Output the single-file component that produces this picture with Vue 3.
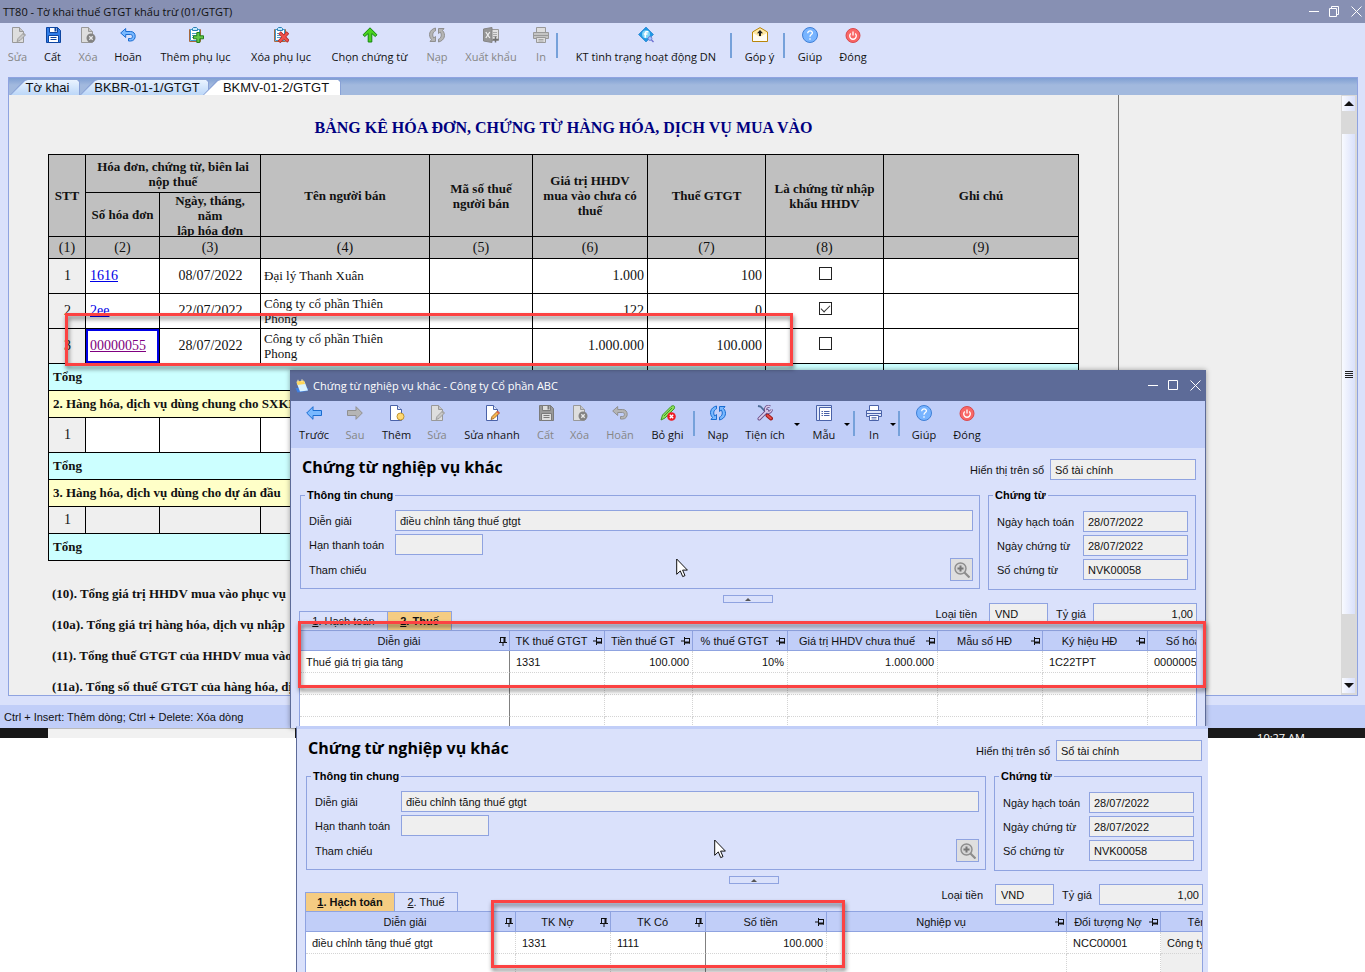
<script setup>
const mainTools = [
  { icon: 'edit', label: 'Sửa', w: 35, off: true },
  { icon: 'save', label: 'Cất', w: 35 },
  { icon: 'delete', label: 'Xóa', w: 36, off: true },
  { icon: 'undo', label: 'Hoãn', w: 44 },
  { icon: 'list-add', label: 'Thêm phụ lục', w: 91 },
  { icon: 'list-del', label: 'Xóa phụ lục', w: 80 },
  { icon: 'up', label: 'Chọn chứng từ', w: 97 },
  { icon: 'refresh', label: 'Nạp', w: 38, off: true },
  { icon: 'excel', label: 'Xuất khẩu', w: 70, off: true },
  { icon: 'print', label: 'In', w: 30, off: true },
  { sep: true },
  { icon: 'check', label: 'KT tình trạng hoạt động DN', w: 168 },
  { sep: true },
  { icon: 'mail', label: 'Góp ý', w: 47 },
  { sep: true },
  { icon: 'help', label: 'Giúp', w: 42 },
  { icon: 'power', label: 'Đóng', w: 44 },
]

const voucherTools = [
  { icon: 'prev', label: 'Trước', w: 46 },
  { icon: 'next', label: 'Sau', w: 36, off: true },
  { icon: 'new', label: 'Thêm', w: 47 },
  { icon: 'edit', label: 'Sửa', w: 34, off: true },
  { icon: 'edit', label: 'Sửa nhanh', w: 76 },
  { icon: 'save', label: 'Cất', w: 31, off: true },
  { icon: 'delete', label: 'Xóa', w: 37, off: true },
  { icon: 'undo', label: 'Hoãn', w: 44, off: true },
  { icon: 'unpost', label: 'Bỏ ghi', w: 51 },
  { sep: true },
  { icon: 'refresh', label: 'Nạp', w: 38 },
  { icon: 'tools', label: 'Tiện ích', w: 56 },
  { drop: true, label: 'Mở Tiện ích', w: 12 },
  { icon: 'form', label: 'Mẫu', w: 38 },
  { drop: true, label: 'Mở Mẫu', w: 10 },
  { sep: true },
  { icon: 'print', label: 'In', w: 30 },
  { drop: true, label: 'Mở In', w: 9 },
  { sep: true },
  { icon: 'help', label: 'Giúp', w: 40 },
  { icon: 'power', label: 'Đóng', w: 46 },
]

const sheetTabs = [
  { label: 'Tờ khai', w: 70 },
  { label: 'BKBR-01-1/GTGT', w: 129 },
  { label: 'BKMV-01-2/GTGT', w: 138, active: true },
]

const sheetCols = [37, 74, 101, 169, 103, 115, 118, 118, 195]

const invoices = [
  { n: 1, no: '1616', date: '08/07/2022', seller: 'Đại lý Thanh Xuân', value: '1.000', tax: '100' },
  { n: 2, no: '2ee', date: '22/07/2022', seller: 'Công ty cổ phần Thiên Phong', value: '122', tax: '0', imported: true },
  { n: 3, no: '00000055', date: '28/07/2022', seller: 'Công ty cổ phần Thiên Phong', value: '1.000.000', tax: '100.000', picked: true },
]

const notes = [
  '(10). Tổng giá trị HHDV mua vào phục vụ',
  '(10a). Tổng giá trị hàng hóa, dịch vụ nhập',
  '(11). Tổng thuế GTGT của HHDV mua vào',
  '(11a). Tổng số thuế GTGT của hàng hóa, dịch vụ',
]

const vouchers = [
  {
    id: 'tax',
    framed: true,
    tabs: [
      { key: '1', label: 'Hạch toán', w: 89 },
      { key: '2', label: 'Thuế', w: 64, active: true },
    ],
    cols: [
      { label: 'Diễn giải', w: 210, value: 'Thuế giá trị gia tăng', upright: true, frozen: true },
      { label: 'TK thuế GTGT', w: 95, value: '1331' },
      { label: 'Tiền thuế GT', w: 88, value: '100.000', right: true },
      { label: '% thuế GTGT', w: 95, value: '10%', right: true },
      { label: 'Giá trị HHDV chưa thuế', w: 150, value: '1.000.000', right: true },
      { label: 'Mẫu số HĐ', w: 105, value: '' },
      { label: 'Ký hiệu HĐ', w: 105, value: '1C22TPT' },
      { label: 'Số hóa đơn', w: 105, value: '00000055' },
    ],
    blanks: 3,
  },
  {
    id: 'post',
    framed: false,
    tabs: [
      { key: '1', label: 'Hạch toán', w: 90, active: true },
      { key: '2', label: 'Thuế', w: 63 },
    ],
    cols: [
      { label: 'Diễn giải', w: 210, value: 'điều chỉnh tăng thuế gtgt', upright: true },
      { label: 'TK Nợ', w: 95, value: '1331', upright: true },
      { label: 'TK Có', w: 95, value: '1111', upright: true, frozen: true },
      { label: 'Số tiền', w: 121, value: '100.000', right: true },
      { label: 'Nghiệp vụ', w: 240, value: '' },
      { label: 'Đối tượng Nợ', w: 94, value: 'NCC00001' },
      { label: 'Tên', w: 84, value: 'Công ty', locked: true },
    ],
    blanks: 1,
  },
]
const total = (cols) => cols.reduce((sum, c) => sum + c.w, 0)
</script>

<template>
  <div class="desktop">
    <svg class="defs" aria-hidden="true">
      <symbol id="i-edit" viewBox="0 0 16 16">
        <path d="M2.500.5h7l4 4v11h-11z" fill="var(--paper)" stroke="var(--line)" />
        <path d="M9.500.500v4h4" fill="var(--fold)" stroke="var(--line)" />
        <path d="M7 14.500l1-3L13.500 6l2 2L10 13.500z" fill="var(--pencil)" stroke="var(--pencil-line)" stroke-width=".8" />
        <path d="M12.500 7l2 2 1-1-2-2z" fill="var(--eraser)" />
      </symbol>
      <symbol id="i-save" viewBox="0 0 16 16">
        <path d="M1.500.500h11l3 3v12h-14z" fill="var(--disk)" stroke="var(--disk-line)" />
        <path d="M4.500.500h8v5h-8z" fill="var(--paper)" stroke="var(--disk-line)" />
        <path d="M9.500 1h2v3.500h-2z" fill="var(--disk-line)" />
        <path d="M3.500 8.500h10v7h-10z" fill="var(--paper)" stroke="var(--disk-line)" />
        <path d="M5.500 10.500h6M5.500 12.500h6" stroke="var(--disk-line)" />
      </symbol>
      <symbol id="i-delete" viewBox="0 0 16 16">
        <path d="M1.500.5h7l4 4v11h-11z" fill="var(--paper)" stroke="var(--line)" />
        <path d="M8.500.5v4h4" fill="var(--fold)" stroke="var(--line)" />
        <circle cx="11" cy="11" r="4.500" fill="#838383" />
        <path d="M9.300 9.300l3.400 3.400M12.700 9.300l-3.400 3.400" stroke="#e8e8e8" stroke-width="1.300" />
      </symbol>
      <symbol id="i-undo" viewBox="0 0 16 16">
        <path d="M.7 6l5-4.500v3h5c6 0 6 9.500 0 9.500H8.500v-2.500h2c2.600 0 2.600-4 0-4H5.700v3z" fill="var(--blue)" stroke="var(--blue-line)" stroke-linejoin="round" />
      </symbol>
      <symbol id="i-clip" viewBox="0 0 16 16">
        <path d="M1.500 2.500h11v12h-11z" fill="#fff" stroke="#a9683c" />
        <path d="M2.500 2.500h9v11h-9z" fill="#fff" stroke="#3c9ad0" />
        <path d="M4.500 3.500v-2l1-1h3l1 1v2z" fill="#bfe8fb" stroke="#2b80b4" />
        <path d="M4 6.500h6M4 8.500h5M4 10.500h4" stroke="#4f9fca" />
      </symbol>
      <symbol id="i-list-add" viewBox="0 0 16 16">
        <use href="#i-clip" />
        <path d="M8.800 5.500h3v3.300h3.700v3h-3.700v3.700h-3v-3.700H5.500v-3h3.300z" fill="#63c745" stroke="#237f1d" />
      </symbol>
      <symbol id="i-list-del" viewBox="0 0 16 16">
        <use href="#i-clip" />
        <path d="M6.500 5.500l9 9M15 5.500l-9 9.500" stroke="#b02a2a" stroke-width="3.600" />
        <path d="M6.800 6l8 8M14.500 6l-8 8.500" stroke="#f0524c" stroke-width="2.200" />
      </symbol>
      <symbol id="i-up" viewBox="0 0 16 16">
        <path d="M8 .8l7 7-1.800 1.700-3.400-3V15H6.200V6.500l-3.400 3L1 7.800z" fill="#4bd31e" stroke="#13870d" />
      </symbol>
      <symbol id="i-refresh" viewBox="0 0 16 16">
        <path d="M6.500 1C0 2.500-1 9 2.500 12.500L1 14.500h5.500V9.500L4.700 11C3 8.500 3.500 5 6.500 3.800z" fill="var(--blue)" stroke="var(--blue-line)" stroke-linejoin="round" />
        <path d="M9.500 15c6.500-1.500 7.500-8 4-11.500L15 1.500H9.500v5L11.300 5c1.700 2.500 1.200 6-1.800 7.200z" fill="var(--blue)" stroke="var(--blue-line)" stroke-linejoin="round" />
      </symbol>
      <symbol id="i-excel" viewBox="0 0 16 16">
        <path d="M8 2.500h7.500v11H8z" fill="#e2e2e2" stroke="#999" />
        <path d="M10 5.500h4M10 7.500h4M10 9.500h4" stroke="#aaa" />
        <path d="M.5 2L9 .5v15L.5 14z" fill="#969696" stroke="#858585" />
        <path d="M2.800 5l4 6M6.800 5l-4 6" stroke="#eee" stroke-width="1.300" />
        <path d="M12.500 9.500v6M9.500 12.500h6" stroke="#707070" stroke-width="1.500" />
      </symbol>
      <symbol id="i-print" viewBox="0 0 16 16">
        <path d="M3.500.5h9v5h-9z" fill="var(--paper)" stroke="var(--line)" />
        <path d="M.5 5.500h15v6H.5z" fill="var(--fold)" stroke="var(--line)" />
        <path d="M1 8.500h14" stroke="var(--line)" />
        <path d="M3.500 10.500h9v5h-9z" fill="var(--paper)" stroke="var(--line)" />
        <path d="M5.500 12.500h5M5.500 14h5" stroke="var(--line)" stroke-width=".8" />
      </symbol>
      <symbol id="i-check" viewBox="0 0 16 16">
        <path d="M8 0L15.500 7.500 8 15 .5 7.500z" fill="#1e98e4" stroke="#1876c8" stroke-width=".6" stroke-linejoin="round" />
        <circle cx="8" cy="7.300" r="4" fill="#7fd3f7" />
        <path d="M10.300 4.700H8.500c-1 0-1.200.6-1.200 1.500v4.500M5.800 7h3.700" fill="none" stroke="#fff" stroke-width="1.500" />
        <circle cx="12" cy="11.500" r="1.900" fill="#a9c8ff" stroke="#6d7fd6" />
        <path d="M13.500 13l2 2" stroke="#6d6fd0" stroke-width="1.500" />
      </symbol>
      <symbol id="i-mail" viewBox="0 0 16 16">
        <path d="M.5 5L8 .6 15.500 5v9.500H.5z" fill="#ffe9a3" stroke="#b8860b" />
        <path d="M1 6l7 4 7-4v8H1z" fill="#fffdf4" />
        <path d="M8 3l3 3.200H9V9H7V6.200H5z" fill="#1d1d1d" />
      </symbol>
      <symbol id="i-help" viewBox="0 0 16 16">
        <circle cx="8" cy="8" r="7.500" fill="#78b4ff" stroke="#3f7fd6" />
        <path d="M5.700 6.200c0-3.200 4.900-3 4.700-.2C10.300 7.600 8 7.700 8 9.700M8 11.200v1.500" fill="none" stroke="#fff" stroke-width="1.300" />
      </symbol>
      <symbol id="i-power" viewBox="0 0 16 16">
        <circle cx="8" cy="8.500" r="7" fill="#f96766" stroke="#d94a4f" />
        <path d="M5.800 6.500a3.300 3.300 0 1 0 4.400 0M8 4.500v4" fill="none" stroke="#fff" stroke-width="1.300" />
      </symbol>
      <symbol id="i-prev" viewBox="0 0 16 16">
        <path d="M.7 8L7 1.700v3.800h8.500v5H7v3.800z" fill="var(--blue)" stroke="var(--blue-line)" stroke-linejoin="round" />
      </symbol>
      <symbol id="i-next" viewBox="0 0 16 16">
        <path d="M15.300 8L9 1.700v3.800H.5v5H9v3.800z" fill="var(--blue)" stroke="var(--blue-line)" stroke-linejoin="round" />
      </symbol>
      <symbol id="i-new" viewBox="0 0 16 16">
        <path d="M1.500.5h7l4 4v11h-11z" fill="#fff" stroke="#4a62a8" />
        <path d="M8.500.5v4h4" fill="#dfe7fb" stroke="#4a62a8" />
        <circle cx="11.500" cy="11.500" r="3.500" fill="#ffd873" stroke="#bf9530" />
      </symbol>
      <symbol id="i-unpost" viewBox="0 0 16 16">
        <path d="M1 15l1.500-5L11 1.500c3-2 4.500 0 3 2.500L5 13z" fill="#8de05a" stroke="#3c9a26" />
        <path d="M4 11l8-8" stroke="#3c9a26" />
        <circle cx="11.500" cy="11.500" r="4.300" fill="#ee1c24" />
        <path d="M9.800 9.800l3.400 3.400M13.200 9.800l-3.400 3.400" stroke="#fff" stroke-width="1.400" />
      </symbol>
      <symbol id="i-tools" viewBox="0 0 16 16">
        <path d="M1 1l2.500.5 6.500 7" fill="none" stroke="#4c6b95" stroke-width="1.800" />
        <path d="M10.500 10.500l3.500 3" stroke="#9c1b1b" stroke-width="4" stroke-linecap="round" />
        <path d="M10.500 10.500l3.300 2.800" stroke="#ea4c45" stroke-width="2" stroke-linecap="round" />
        <path d="M2.300 13.700l8-8" stroke="#6a4b86" stroke-width="3.600" stroke-linecap="round" />
        <path d="M13 1.700A3 3 0 1 0 14.500 4.500" fill="none" stroke="#6a4b86" stroke-width="3" />
        <path d="M13 1.700A3 3 0 1 0 14.500 4.500" fill="none" stroke="#dccdea" stroke-width="1.400" />
        <path d="M2.300 13.700l8-8" stroke="#dccdea" stroke-width="1.800" stroke-linecap="round" />
      </symbol>
      <symbol id="i-form" viewBox="0 0 16 16">
        <path d="M.5.500h15v3H4v12H.5z" fill="#dfe7fb" stroke="#4a62a8" />
        <path d="M3.500 2.500h12v13h-12z" fill="#fff" stroke="#4a62a8" />
        <path d="M5.500 6.500H7M8 6.500h5.500M5.500 8.500H7M8 8.500h5.500M5.500 10.500H7M8 10.500h5.500" stroke="#4a62a8" />
      </symbol>
      <symbol id="i-pin" viewBox="0 0 10 10">
        <path d="M2.500 1v5M6.500 1v5M2 1.500h5.500M1 6.500h8M5 6.500V10" fill="none" stroke="#111" />
        <path d="M6.500 1v5.500" stroke="#111" stroke-width="2" />
      </symbol>
      <symbol id="i-zoom" viewBox="0 0 16 16">
        <circle cx="6.500" cy="6.500" r="5.500" fill="#d5d5d5" stroke="#8d8d8d" stroke-width="1.400" />
        <path d="M6.500 3.500v6M3.500 6.500h6" stroke="#777" stroke-width="2" />
        <path d="M10.500 10.500l5 5" stroke="#8d8d8d" stroke-width="2.200" />
      </symbol>
      <symbol id="i-cursor" viewBox="0 0 12 20">
        <path d="M.7 1v15.300l3.600-3.400 2.400 5.700 2.300-1-2.400-5.500h4.800z" fill="#fff" stroke="#111" />
      </symbol>
      <symbol id="i-book" viewBox="0 0 14 14">
        <path d="M.5 9l2 4.500 10-1.500 1-3z" fill="#3f7fe0" />
        <path d="M1.500 3.500l8-1 3.500 9-8 1z" fill="#d9f2ff" />
        <path d="M1.500 2.500l7.500-1 1 3.500-7.500 1z" fill="#ffd65a" />
        <path d="M3 .8v2.500M7 .3v2.500" stroke="#fff2c0" />
      </symbol>
    </svg>

    <main class="app">
      <header class="titlebar">
        <span class="title">TT80 - Tờ khai thuế GTGT khấu trừ (01/GTGT)</span>
        <span class="controls">
          <button aria-label="Thu nhỏ"><svg viewBox="0 0 11 11"><path d="M0 5.500h10" /></svg></button>
          <button aria-label="Khôi phục"><svg viewBox="0 0 11 11"><path d="M.5 2.500h7v8h-7zM2.500 2.500v-2h7v8h-2" /></svg></button>
          <button aria-label="Đóng cửa sổ"><svg viewBox="0 0 11 11"><path d="M.5.500l10 10M10.500.500l-10 10" /></svg></button>
        </span>
      </header>

      <nav class="toolbar">
        <template v-for="(t, i) in mainTools" :key="i">
          <span v-if="t.sep" class="sep"></span>
          <button v-else class="tool" :class="{ off: t.off }" :style="{ width: t.w + 'px' }">
            <svg class="ico"><use :href="'#i-' + t.icon" /></svg>
            <span>{{ t.label }}</span>
          </button>
        </template>
      </nav>

      <section class="panel">
        <div class="sheet-tabs">
          <button v-for="t in sheetTabs" :key="t.label" class="sheet-tab" :class="{ active: t.active }" :style="{ width: t.w + 'px' }">
            <span>{{ t.label }}</span>
          </button>
        </div>
        <div class="view">
          <article class="page">
            <h1>BẢNG KÊ HÓA ĐƠN, CHỨNG TỪ HÀNG HÓA, DỊCH VỤ MUA VÀO</h1>
            <table class="ledger">
              <colgroup>
                <col v-for="(w, i) in sheetCols" :key="i" :style="{ width: w + 'px' }" />
              </colgroup>
              <thead>
                <tr class="h38">
                  <th rowspan="2">STT</th>
                  <th colspan="2">Hóa đơn, chứng từ, biên lai nộp thuế</th>
                  <th rowspan="2">Tên người bán</th>
                  <th rowspan="2">Mã số thuế<br />người bán</th>
                  <th rowspan="2">Giá trị HHDV<br />mua vào chưa có<br />thuế</th>
                  <th rowspan="2">Thuế GTGT</th>
                  <th rowspan="2">Là chứng từ nhập khẩu HHDV</th>
                  <th rowspan="2">Ghi chú</th>
                </tr>
                <tr class="h44">
                  <th>Số hóa đơn</th>
                  <th><div class="clip43">Ngày, tháng, năm<br />lập hóa đơn</div></th>
                </tr>
                <tr class="h22">
                  <td v-for="n in 9" :key="n">({{ n }})</td>
                </tr>
              </thead>
              <tbody>
                <tr v-for="r in invoices" :key="r.n" class="h35">
                  <td class="idx">{{ r.n }}</td>
                  <td class="left" :class="{ picked: r.picked }"><a href="#">{{ r.no }}</a></td>
                  <td>{{ r.date }}</td>
                  <td class="left seller">{{ r.seller }}</td>
                  <td></td>
                  <td class="right">{{ r.value }}</td>
                  <td class="right">{{ r.tax }}</td>
                  <td><input type="checkbox" :checked="r.imported" :aria-label="'Chứng từ nhập khẩu ' + r.n" /></td>
                  <td></td>
                </tr>
                <tr class="h27 sum"><td colspan="5">Tổng</td><td></td><td></td><td></td><td></td></tr>
                <tr class="h27 part"><td colspan="9">2. Hàng hóa, dịch vụ dùng chung cho SXKD</td></tr>
                <tr class="h35"><td class="idx">1</td><td v-for="n in 8" :key="n"></td></tr>
                <tr class="h27 sum"><td colspan="5">Tổng</td><td></td><td></td><td></td><td></td></tr>
                <tr class="h27 part"><td colspan="9">3. Hàng hóa, dịch vụ dùng cho dự án đầu</td></tr>
                <tr class="h27 grey"><td>1</td><td v-for="n in 8" :key="n"></td></tr>
                <tr class="h27 sum"><td colspan="5">Tổng</td><td></td><td></td><td></td><td></td></tr>
              </tbody>
            </table>
            <div class="notes">
              <p v-for="n in notes" :key="n">{{ n }}</p>
            </div>
          </article>
          <div class="scroll">
            <button aria-label="Cuộn lên"><span class="tri up"></span></button>
            <span class="track short"></span>
            <span class="thumb"><i></i><i></i><i></i><i></i></span>
            <span class="track"></span>
            <button aria-label="Cuộn xuống"><span class="tri down"></span></button>
          </div>
        </div>
      </section>
      <footer class="status">Ctrl + Insert: Thêm dòng; Ctrl + Delete: Xóa dòng</footer>
      <div class="taskbar"><span class="start"></span><span class="search"></span><span class="clock">10:27 AM</span></div>
    </main>

    <section v-for="v in vouchers" :key="v.id" class="win" :class="v.framed ? 'front' : 'lower'">
      <template v-if="v.framed">
        <header class="win-title">
          <svg class="book"><use href="#i-book" /></svg>
          <span class="title">Chứng từ nghiệp vụ khác - Công ty Cổ phần ABC</span>
          <span class="controls">
            <button aria-label="Thu nhỏ"><svg viewBox="0 0 11 11"><path d="M0 5.500h10" /></svg></button>
            <button aria-label="Phóng to"><svg viewBox="0 0 11 11"><path d="M.5.500h9v9h-9z" /></svg></button>
            <button aria-label="Đóng chứng từ"><svg viewBox="0 0 11 11"><path d="M.5.500l10 10M10.500.500l-10 10" /></svg></button>
          </span>
        </header>
        <nav class="toolbar win-tools">
          <template v-for="(t, i) in voucherTools" :key="i">
            <span v-if="t.sep" class="sep"></span>
            <button v-else-if="t.drop" class="drop" :aria-label="t.label" :style="{ width: t.w + 'px' }"><span></span></button>
            <button v-else class="tool" :class="{ off: t.off }" :style="{ width: t.w + 'px' }">
              <svg class="ico"><use :href="'#i-' + t.icon" /></svg>
              <span>{{ t.label }}</span>
            </button>
          </template>
        </nav>
      </template>

      <div class="form">
        <div class="form-head">
          <h2>Chứng từ nghiệp vụ khác</h2>
          <label :for="v.id + '-book'">Hiển thị trên sổ</label>
          <input :id="v.id + '-book'" class="w-book" readonly value="Sổ tài chính" />
        </div>

        <div class="groups">
          <fieldset class="general">
            <legend>Thông tin chung</legend>
            <div class="row">
              <label :for="v.id + '-desc'">Diễn giải</label>
              <input :id="v.id + '-desc'" class="grow" readonly value="điều chỉnh tăng thuế gtgt" />
            </div>
            <div class="row">
              <label :for="v.id + '-term'">Hạn thanh toán</label>
              <input :id="v.id + '-term'" class="w-term" readonly value="" />
            </div>
            <div class="row last">
              <label :for="v.id + '-ref'">Tham chiếu</label>
              <button :id="v.id + '-ref'" class="lookup" aria-label="Tham chiếu"><svg><use href="#i-zoom" /></svg></button>
            </div>
          </fieldset>
          <fieldset class="doc">
            <legend>Chứng từ</legend>
            <div class="row">
              <label :for="v.id + '-d1'">Ngày hạch toán</label>
              <input :id="v.id + '-d1'" class="grow" readonly value="28/07/2022" />
            </div>
            <div class="row">
              <label :for="v.id + '-d2'">Ngày chứng từ</label>
              <input :id="v.id + '-d2'" class="grow" readonly value="28/07/2022" />
            </div>
            <div class="row">
              <label :for="v.id + '-no'">Số chứng từ</label>
              <input :id="v.id + '-no'" class="grow" readonly value="NVK00058" />
            </div>
          </fieldset>
        </div>

        <button class="fold" aria-label="Thu gọn"><span></span></button>

        <div class="tab-row">
          <button v-for="t in v.tabs" :key="t.key" class="tab" :class="{ active: t.active }" :style="{ width: t.w + 'px' }">
            <u>{{ t.key }}</u>. {{ t.label }}
          </button>
          <span class="currency">
            <label :for="v.id + '-cur'">Loại tiền</label>
            <input :id="v.id + '-cur'" class="w-cur" readonly value="VND" />
            <label :for="v.id + '-rate'">Tỷ giá</label>
            <input :id="v.id + '-rate'" class="w-rate" readonly value="1,00" />
          </span>
        </div>

        <div class="grid-box">
          <table class="grid" :style="{ width: total(v.cols) + 'px' }">
            <colgroup>
              <col v-for="c in v.cols" :key="c.label" :style="{ width: c.w + 'px' }" />
            </colgroup>
            <thead>
              <tr>
                <th v-for="c in v.cols" :key="c.label">
                  <div class="cap">
                    <span>{{ c.label }}</span>
                    <svg class="pin" :class="{ flat: !c.upright }"><use href="#i-pin" /></svg>
                  </div>
                </th>
              </tr>
            </thead>
            <tbody>
              <tr>
                <td v-for="c in v.cols" :key="c.label" :class="{ right: c.right, frozen: c.frozen, locked: c.locked }">{{ c.value }}</td>
              </tr>
              <tr v-for="n in v.blanks" :key="n">
                <td v-for="c in v.cols" :key="c.label" :class="{ frozen: c.frozen, locked: c.locked }"></td>
              </tr>
            </tbody>
          </table>
        </div>
      </div>
    </section>

    <svg class="cursor first"><use href="#i-cursor" /></svg>
    <svg class="cursor second"><use href="#i-cursor" /></svg>
    <div class="mark invoice-row"></div>
    <div class="mark tax-row"></div>
    <div class="mark entry-row"></div>
  </div>
</template>

<style>
body {
  margin: 0;
  background: #fff;
}
</style>

<style scoped>
* {
  box-sizing: border-box;
}
button {
  margin: 0;
  padding: 0;
  border: 0;
  background: none;
  font: inherit;
  color: inherit;
}
.desktop {
  --ui: "Open Sans", "Noto Sans", sans-serif;
  --edge: #8fa3e0;
  --pale: #dae1fb;
  --mid: #c1cef8;
  --line: #4a62a8;
  --paper: #fff;
  --fold: #dfe7fb;
  --pencil: #f7b64d;
  --pencil-line: #8e5a1f;
  --eraser: #e0574f;
  --disk: #2f7de8;
  --disk-line: #0d45a0;
  --blue: #78b8ff;
  --blue-line: #1a6cd0;
  position: relative;
  min-height: 100vh;
  overflow: hidden;
  background: #fff;
  font: 11px/16px "Liberation Sans", Arial, sans-serif;
  color: #111;
}
.defs {
  position: absolute;
  width: 0;
  height: 0;
}
.app {
  background: var(--pale);
}
.titlebar {
  display: flex;
  align-items: center;
  height: 23px;
  padding: 0 3px;
  background: #8790b3;
  font: 11px/16px var(--ui);
}
.title {
  flex: 1;
}
.controls {
  display: flex;
  gap: 9px;
}
.controls button {
  width: 11px;
  height: 11px;
}
.controls button:last-child {
  margin-left: 2px;
}
.controls svg {
  display: block;
  width: 11px;
  height: 11px;
  fill: none;
  stroke: #fff;
}
.toolbar {
  display: flex;
  height: 54px;
  font: 11px/16px var(--ui);
  white-space: nowrap;
}
.tool {
  display: flex;
  flex: none;
  flex-direction: column;
  align-items: center;
  gap: 6px;
  padding-top: 4px;
}
.ico {
  flex: none;
  width: 16px;
  height: 16px;
}
.off {
  --line: #999;
  --paper: #dedede;
  --fold: #c4c4c4;
  --pencil: #c8c8c8;
  --pencil-line: #929292;
  --eraser: #a5a5a5;
  --disk: #999;
  --disk-line: #7b7b7b;
  --blue: #b5b5b5;
  --blue-line: #909090;
  color: #868686;
}
.sep {
  flex: none;
  width: 6px;
  height: 25px;
  margin-top: 10px;
  border-left: 2px solid #76a1da;
}
.drop {
  display: flex;
  height: 25px;
  margin-top: 11px;
  padding-left: 1px;
  align-items: center;
}
.drop span {
  border: 3px solid transparent;
  border-top-color: #000;
  border-bottom: 0;
}
.panel {
  margin: 0 7px 0 8px;
  border: 1px solid var(--edge);
}
.sheet-tabs {
  display: flex;
  height: 17px;
  padding: 1px 0 0 1px;
  background: linear-gradient(#7f9fd3, #a2b9de 7px);
}
.sheet-tab {
  position: relative;
  font: 13px/15px "Liberation Sans", Arial, sans-serif;
  padding-left: 5px;
}
.sheet-tab.active {
  margin-left: -6px;
  padding-left: 8px;
}
.sheet-tab::before,
.sheet-tab::after {
  content: "";
  position: absolute;
  inset: 0;
  background: #fff;
  clip-path: polygon(0 100%, 14px 1px, 17px 0, calc(100% - 2px) 0, 100% 2px, 100% 100%);
}
.sheet-tab::before {
  background: #89a2d6;
}
.sheet-tab::after {
  inset: 1px 1px 0 1px;
  background: linear-gradient(#eaf3ff, #bcd7f8);
}
.sheet-tab.active::after {
  background: #fff;
}
.sheet-tab span {
  position: relative;
  z-index: 1;
}
.view {
  display: flex;
  background: #efefef;
}
.page {
  flex: none;
  width: 1110px;
  padding: 23px 0 0 39px;
  border-right: 1px solid #777;
  font: 14px/15px "Liberation Serif", "Times New Roman", serif;
}
h1 {
  margin: 0 39px 16px 0;
  font-size: 16px;
  line-height: 20px;
  text-align: center;
  color: #000080;
  white-space: nowrap;
}
.ledger {
  width: 1031px;
  table-layout: fixed;
  border-collapse: collapse;
  text-align: center;
}
.ledger th,
.ledger td {
  padding: 0 3px;
  border: 1px solid #000;
  background: #fff;
}
.ledger tbody td {
  padding: 0 3px 2px 4px;
}
.ledger thead th,
.ledger thead td {
  background: #c0c0c0;
}
.ledger th {
  font-size: 13px;
}
.h22 { height: 22px; }
.h27 { height: 27px; }
.h35 { height: 35px; }
.h38 { height: 38px; }
.h44 { height: 44px; }
.clip43 {
  height: 43px;
  overflow: hidden;
}
.ledger .left {
  text-align: left;
}
.ledger tbody .seller {
  padding: 0 36px 1px 3px;
  font-size: 13px;
}
.ledger .right {
  text-align: right;
}
.ledger td.idx,
.ledger .grey td {
  background: #efefef;
}
.ledger .sum td,
.ledger .part td {
  background: #ccffff;
  font-size: 13px;
  font-weight: bold;
  text-align: left;
}
.ledger .part td {
  background: #ffffc8;
}
.ledger a {
  color: #0000e6;
}
.ledger .picked {
  box-shadow: inset 0 0 0 2px #0000e6;
}
.ledger .picked a {
  color: #800080;
}
input[type="checkbox"] {
  display: block;
  width: 13px;
  height: 13px;
  margin: 0 auto 3px;
  appearance: none;
  border: 1px solid #222;
  background: #fff;
}
input[type="checkbox"]:checked::after {
  content: "";
  display: block;
  width: 8px;
  height: 4px;
  margin: 2px 0 0 1px;
  border: solid #333;
  border-width: 0 0 1px 1px;
  transform: rotate(-45deg);
}
.notes {
  display: flex;
  flex-direction: column;
  gap: 15px;
  margin: 25px 0 0 4px;
  font-size: 13px;
  font-weight: bold;
  line-height: 16px;
}
.notes p {
  margin: 0;
}
.scroll {
  display: flex;
  flex-direction: column;
  width: 16px;
  margin-left: auto;
  padding: 1px 2px 2px 1px;
  background: #d9d9d9;
}
.scroll button,
.thumb {
  display: flex;
  align-items: center;
  justify-content: center;
  height: 15px;
  background: linear-gradient(90deg, #f8faff, #dae1fb);
}
.track.short {
  height: 23px;
}
.track {
  height: 64px;
}
.thumb {
  flex: 1;
  flex-direction: column;
  gap: 1px;
}
.thumb i {
  width: 8px;
  height: 1px;
  background: #222;
}
.tri {
  border: 5px solid transparent;
}
.tri.up {
  border-top: 0;
  border-bottom-color: #111;
}
.tri.down {
  border-bottom: 0;
  border-top-color: #111;
}
.status {
  margin-top: 9px;
  padding: 4px 4px 3px;
  background: var(--mid);
}
.taskbar {
  display: flex;
  height: 10px;
  overflow: hidden;
  background: #1a1a1a;
}
.start {
  width: 48px;
  background: #171717;
}
.search {
  width: 247px;
  background: #f1f1f1;
  border-top: 1px solid #bbb;
}
.clock {
  margin-left: auto;
  width: 168px;
  padding-top: 2px;
  text-align: center;
  font: 11px/16px var(--ui);
  color: #fff;
}
.win {
  position: absolute;
  background: var(--pale);
  border-left: 1px solid #5d6b98;
  overflow: hidden;
}
.front {
  left: 290px;
  top: 370px;
  width: 916px;
  height: 358px;
  border-right: 1px solid #5d6b98;
  box-shadow: 0 0 5px rgba(0, 0, 0, 0.35);
}
.lower {
  left: 296px;
  top: 726px;
  width: 912px;
  border-top: 3px solid var(--mid);
}
.win-title {
  display: flex;
  align-items: center;
  height: 31px;
  padding: 0 4px;
  background: #5d6b98;
  color: #fff;
  font: 11px/16px var(--ui);
}
.book {
  width: 14px;
  height: 14px;
  margin-right: 4px;
}
.win-tools {
  height: 47px;
  background: var(--mid);
}
.form {
  padding: 11px 8px 0;
}
.lower .form {
  padding-right: 5px;
}
.form-head {
  display: flex;
  align-items: center;
  gap: 6px;
  margin: 0 1px 0 3px;
}
h2 {
  flex: 1;
  align-self: flex-start;
  margin: 0;
  font: bold 16px/16px var(--ui);
  color: #000;
  white-space: nowrap;
}
.form input {
  height: 21px;
  padding: 0 4px;
  border: 1px solid var(--edge);
  border-radius: 0;
  outline: 0;
  background: #efefef;
  font: inherit;
  color: inherit;
  min-width: 0;
}
.form .w-book { width: 146px; }
.form .w-term { width: 88px; }
.form .w-cur { width: 59px; padding-left: 5px; }
.form .w-rate { width: 104px; text-align: right; padding-right: 3px; }
.grow {
  flex: 1;
}
.groups {
  display: flex;
  align-items: flex-start;
  gap: 8px;
  margin: 7px 1px 0;
}
fieldset {
  margin: 0;
  min-width: 0;
  border: 1px solid var(--edge);
}
.general {
  flex: 1;
  padding: 7px 6px 7px 8px;
}
.doc {
  width: 208px;
  padding: 8px 7px 9px 8px;
}
legend {
  margin-left: -4px;
  padding: 0 2px;
  font-weight: bold;
  line-height: 16px;
  color: #000;
}
.row {
  display: flex;
  align-items: center;
}
.row + .row {
  margin-top: 3px;
}
.row label {
  width: 86px;
  padding-top: 1px;
  line-height: 20px;
  white-space: nowrap;
}
.last {
  justify-content: space-between;
}
.lookup {
  display: flex;
  align-items: center;
  justify-content: center;
  width: 23px;
  height: 23px;
  border: 1px solid var(--edge);
  background: #dfdfdf;
}
.lookup svg {
  width: 16px;
  height: 16px;
}
.fold {
  display: flex;
  align-items: center;
  justify-content: center;
  width: 50px;
  height: 8px;
  margin: 5px auto 0;
  border: 1px solid var(--edge);
}
.fold span {
  border: 3px solid transparent;
  border-top: 0;
  border-bottom-color: #555;
}
.tab-row {
  display: flex;
  align-items: flex-end;
  height: 27px;
}
.tab {
  height: 19px;
  border: 1px solid var(--edge);
  border-bottom: 0;
  white-space: nowrap;
}
.tab + .tab {
  border-left: 0;
}
.tab.active {
  background: #f5cc82;
  font-weight: bold;
}
.currency {
  display: flex;
  align-items: center;
  align-self: flex-start;
  gap: 7px;
  margin-left: auto;
}
.currency label:first-child {
  margin-right: 5px;
}
.currency .w-cur {
  margin-right: 1px;
}
.grid-box {
  overflow: hidden;
  border: 1px solid var(--edge);
  border-bottom: 0;
}
.grid {
  table-layout: fixed;
  border-collapse: separate;
  border-spacing: 0;
}
.grid th {
  height: 20px;
  padding: 0;
  border: solid var(--edge);
  border-width: 0 1px 1px 0;
  background: var(--mid);
  font-weight: normal;
}
.cap {
  display: flex;
  align-items: center;
  white-space: nowrap;
}
.cap span {
  flex: 1;
}
.pin {
  flex: none;
  width: 10px;
  height: 10px;
  margin-right: 1px;
}
.pin.flat {
  transform: rotate(90deg);
}
.grid td {
  height: 22px;
  padding: 0 3px 0 6px;
  border: dotted #d4d4d4;
  border-width: 0 1px 1px 0;
  background: #fff;
  white-space: nowrap;
}
.grid .right {
  text-align: right;
}
.grid .frozen {
  border-right: 1px solid #808080;
}
.grid .locked {
  background: #efefef;
}
.cursor {
  position: absolute;
  width: 12px;
  height: 20px;
}
.cursor.first {
  left: 676px;
  top: 558px;
}
.cursor.second {
  left: 714px;
  top: 839px;
}
.mark {
  position: absolute;
  border: 3px solid #fc4242;
  filter: drop-shadow(1px 3px 2px rgba(0, 0, 0, 0.5));
}
.invoice-row {
  left: 65px;
  top: 313px;
  width: 728px;
  height: 53px;
}
.tax-row {
  left: 298px;
  top: 621px;
  width: 908px;
  height: 67px;
}
.entry-row {
  left: 491px;
  top: 900px;
  width: 354px;
  height: 68px;
}
</style>
